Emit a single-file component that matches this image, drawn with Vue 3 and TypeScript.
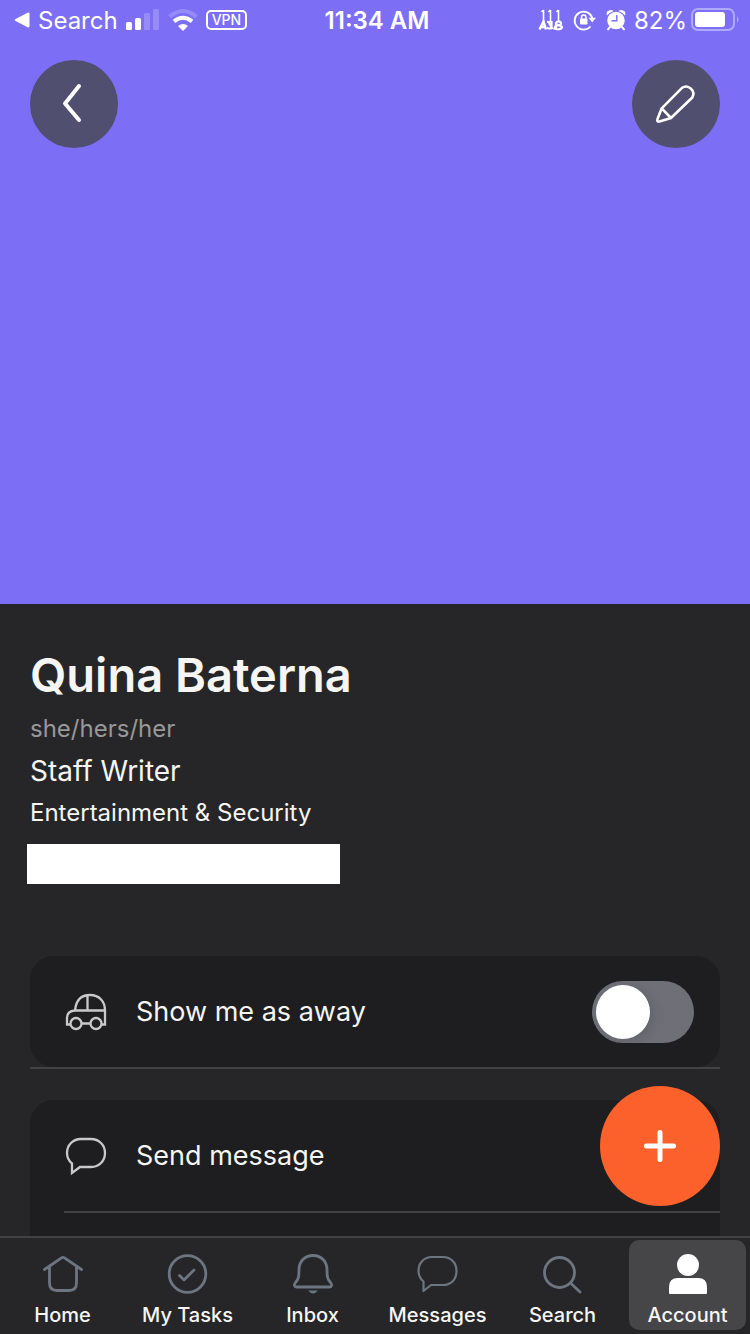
<script setup lang="ts">
import { ref } from 'vue'

interface Tab {
  id: string
  label: string
}

const tabs: Tab[] = [
  { id: 'home', label: 'Home' },
  { id: 'tasks', label: 'My Tasks' },
  { id: 'inbox', label: 'Inbox' },
  { id: 'messages', label: 'Messages' },
  { id: 'search', label: 'Search' },
  { id: 'account', label: 'Account' },
]

const activeTab = ref('account')
const away = ref(false)
</script>

<template>
  <div class="app">
    <div class="scroll">
      <header class="hero">
        <div class="status">
          <div class="status-side">
            <a class="back-app" href="#">
              <svg width="16" height="16" viewBox="0 0 16 16" aria-hidden="true">
                <path d="M1.200 7.200L13.500 0.800Q15.500 0 15.500 2V14Q15.500 16 13.500 15.200L1.200 8.800Q0 8 1.200 7.200Z" fill="#fff" />
              </svg>
              <span>Search</span>
            </a>
            <svg class="signal" width="34" height="22" viewBox="0 0 34 22" aria-hidden="true">
              <rect x="0" y="13" width="6" height="8" rx="1.500" fill="#fff" />
              <rect x="9" y="9" width="6" height="12" rx="1.500" fill="#fff" />
              <rect x="18" y="4" width="6" height="17" rx="1.500" fill="#fff" opacity="0.2" />
              <rect x="27" y="0" width="6" height="21" rx="1.500" fill="#fff" opacity="0.2" />
            </svg>
            <svg class="wifi" width="30" height="22" viewBox="0 0 30 22" aria-hidden="true">
              <path d="M1.600 7.800Q15 -3.800 28.400 7.800" fill="none" stroke="#fff" stroke-width="4" opacity="0.2" />
              <path d="M6 12.400Q15 5 24 12.400" fill="none" stroke="#fff" stroke-width="4" />
              <path d="M10 17Q15 12.800 20 17L15 22Z" fill="#fff" />
            </svg>
            <span class="vpn">VPN</span>
          </div>
          <time class="clock">11:34 AM</time>
          <div class="status-side end">
            <svg width="26" height="22" viewBox="0 0 26 22" fill="none" stroke="#fff" aria-hidden="true">
              <path d="M5.500 1V13M12.500 1V13M20.500 1V13" stroke-width="1.600" />
              <path d="M3.500 3L5.500 1M10.500 3L12.500 1M18.500 3L20.500 1" stroke-width="1.500" />
              <path d="M1.500 20.500L5.500 12.500L8 20.500M3 18H8" stroke-width="2.400" />
              <path d="M9 13H13.500V18Q12 21 9 18.500M11 14L14.500 20" stroke-width="2.200" />
              <path d="M18 13Q23 11.500 23 14.500Q23 16.500 19 16.500Q24 16 24 18.500Q23 21 18 20V13M16 20.500L19 14" stroke-width="2.200" />
            </svg>
            <svg class="lock" width="22" height="22" viewBox="0 0 22 22" fill="none" stroke="#fff" aria-hidden="true">
              <path d="M16.500 17.500A9 9 0 1 1 18.300 9" stroke-width="1.800" />
              <path d="M14.500 8.800H22L18.200 13.500Z" fill="#fff" stroke="none" />
              <path d="M7.500 10V8.500Q7.500 6 9.700 6Q12 6 12 8.500V10" stroke-width="1.500" />
              <rect x="6" y="9.500" width="7.500" height="6" rx="1" fill="#fff" stroke="none" />
            </svg>
            <svg class="alarm" width="20" height="22" viewBox="0 0 20 22" aria-hidden="true">
              <circle cx="10" cy="11.500" r="8.700" fill="#fff" />
              <path d="M1 6.500Q-0.500 2.500 3 1.500Q5.500 0.500 7.500 2Q3 3.500 1 6.500ZM19 6.500Q20.500 2.500 17 1.500Q14.500 0.500 12.500 2Q17 3.500 19 6.500Z" fill="#fff" />
              <path d="M4 18L2 20.300M16 18L18 20.300" stroke="#fff" stroke-width="2" stroke-linecap="round" />
              <path d="M10.800 6V11.800H5.500" fill="none" stroke="#7c6ff6" stroke-width="1.400" />
            </svg>
            <span class="percent">82%</span>
            <svg width="49" height="24" viewBox="0 0 49 24" aria-hidden="true">
              <rect x="1" y="1" width="42" height="21" rx="6" fill="none" stroke="#fff" stroke-width="2" opacity="0.4" />
              <rect x="4" y="4" width="30" height="15" rx="3" fill="#fff" />
              <path d="M46 8Q49 11.500 46 15Z" fill="#fff" opacity="0.4" />
            </svg>
          </div>
        </div>
        <nav class="hero-actions">
          <button class="round" type="button" aria-label="Back">
            <svg width="88" height="88" viewBox="0 0 88 88" aria-hidden="true">
              <path d="M49 26L35 43.500L49 60" fill="none" stroke="#fff" stroke-width="4" stroke-linecap="round" stroke-linejoin="round" />
            </svg>
          </button>
          <button class="round" type="button" aria-label="Edit profile">
            <svg width="88" height="88" viewBox="0 0 88 88" fill="none" stroke="#fff" stroke-width="2.600" stroke-linecap="round" stroke-linejoin="round" aria-hidden="true">
              <path d="M29.700 48.300L50 27.800A7.300 7.300 0 0 1 60.300 37.500L39 58L27.500 61.500Q24.500 62 25.500 59ZM29.700 48.300L39 58" />
            </svg>
          </button>
        </nav>
      </header>

      <main class="content">
        <section class="profile">
          <h1>Quina Baterna</h1>
          <p class="pronouns">she/hers/her</p>
          <p class="role">Staff Writer</p>
          <p class="team">Entertainment &amp; Security</p>
          <div class="redacted"></div>
        </section>

        <section class="group">
          <label class="row" for="away">
            <svg class="row-icon" width="40" height="40" viewBox="0 0 40 40" fill="none" stroke="#c9c9cb" stroke-width="2.300" aria-hidden="true">
              <path d="M4.500 32.500H1V26Q1 19 9 18.500H39V32.500H35.500M15.500 31.500H24.500M9 18.500C10 8 15 3 24 3C33 3 39 9 39 18.500M21.500 3V18.500" />
              <circle cx="10" cy="31.500" r="5.500" />
              <circle cx="30" cy="31.500" r="5.500" />
            </svg>
            <span class="row-label">Show me as away</span>
            <input id="away" v-model="away" class="switch" type="checkbox" role="switch" />
          </label>
        </section>

        <section class="card">
          <button class="row" type="button">
            <svg class="row-icon" width="40" height="40" viewBox="0 0 40 40" fill="none" stroke="#c9c9cb" stroke-width="2.300" aria-hidden="true">
              <path d="M15 3H25C33 3 39 9 39 17C39 25 33 31 25 31H14L6 37V27.500C3 25 1 21 1 17C1 9 7 3 15 3Z" />
            </svg>
            <span class="row-label">Send message</span>
          </button>
          <hr />
        </section>
      </main>
    </div>

    <footer class="dock">
      <button class="fab" type="button" aria-label="Create">
        <svg width="32" height="32" viewBox="0 0 32 32" aria-hidden="true">
          <path d="M16 2.500V29.500M2.500 16H29.500" stroke="#fff" stroke-width="5" stroke-linecap="round" />
        </svg>
      </button>
      <nav class="tabs">
        <button
          v-for="tab in tabs"
          :key="tab.id"
          type="button"
          class="tab"
          :class="{ active: tab.id === activeTab }"
          @click="activeTab = tab.id"
        >
          <svg width="42" height="42" viewBox="0 0 42 42" fill="none" stroke="#6d7580" stroke-width="2.800" stroke-linecap="round" stroke-linejoin="round" aria-hidden="true">
            <path v-if="tab.id === 'home'" d="M2.500 16.500L19.500 4.800Q21 3.800 22.500 4.800L39.500 16.500M7.500 14V30Q7.500 37.500 15 37.500H27Q34.500 37.500 34.500 30V14" />
            <g v-else-if="tab.id === 'tasks'">
              <circle cx="20.500" cy="21" r="18.300" />
              <path d="M12.500 22.500L17 27L27 17" />
            </g>
            <g v-else-if="tab.id === 'inbox'">
              <path d="M21 2.500C12 2.500 7 9 7 17C7 24 6.500 26 3.500 29.500C1.500 32 2.500 34 5 34H37C39.500 34 40.500 32 38.500 29.500C35.500 26 35 24 35 17C35 9 30 2.500 21 2.500Z" />
              <path d="M16 37.500H26Q21 43.500 16 37.500Z" fill="#6d7580" stroke="none" />
            </g>
            <path v-else-if="tab.id === 'messages'" d="M15 4H26C34 4 39.500 10 39.500 18C39.500 26.500 34 32 26 32H14L6.500 38V28.500C3.500 26 1.500 22 1.500 18C1.500 10 7 4 15 4Z" stroke-width="2.200" />
            <path v-else-if="tab.id === 'search'" d="M17.500 4.500A15 15 0 1 1 17.500 34.500A15 15 0 1 1 17.500 4.500ZM29 30.500L38 39" />
            <g v-else fill="#fff" stroke="none">
              <circle cx="21" cy="12" r="11" />
              <path d="M2 40V34Q2 25 11 25H31Q40 25 40 34V40Q40 41 39 41H3Q2 41 2 40Z" />
            </g>
          </svg>
          <span>{{ tab.label }}</span>
        </button>
      </nav>
    </footer>
  </div>
</template>

<style>
body {
  background: #262628;
}
</style>

<style scoped>
.app {
  display: flex;
  flex-direction: column;
  height: 100vh;
  overflow: hidden;
  background: #262628;
  color: #f5f5f3;
  font-family: Inter, "Liberation Sans", sans-serif;
}
button {
  padding: 0;
  border: 0;
  background: none;
  color: inherit;
  font: inherit;
  cursor: pointer;
}
svg {
  display: block;
  flex: none;
  overflow: visible;
}
.scroll {
  display: flex;
  flex: 1;
  flex-direction: column;
  min-height: 0;
  overflow-y: auto;
  scrollbar-width: none;
}
.hero {
  flex: none;
  box-sizing: border-box;
  min-height: 604px;
  background: #7c6ff6;
}
.status {
  display: flex;
  align-items: center;
  height: 40px;
  padding: 0 10px 0 14px;
  color: #fff;
  font-size: 24px;
}
.status-side {
  display: flex;
  flex: 1;
  align-items: center;
}
.end {
  justify-content: flex-end;
}
.back-app {
  display: flex;
  align-items: center;
  gap: 8px;
  color: inherit;
  text-decoration: none;
}
.signal,
.wifi,
.vpn {
  margin-left: 8px;
}
.vpn {
  padding: 0 4px;
  border: 2px solid #fff;
  border-radius: 5px;
  font-size: 14px;
  font-weight: 500;
  line-height: 16px;
}
.clock {
  font-weight: 600;
}
.lock,
.alarm {
  margin-left: 10px;
}
.percent {
  margin: 0 4px 0 8px;
}
.hero-actions {
  display: flex;
  justify-content: space-between;
  padding: 20px 30px 0;
}
.round {
  width: 88px;
  height: 88px;
  border-radius: 50%;
  background: #504f70;
}
.content {
  display: flex;
  flex: 1;
  flex-direction: column;
  padding: 40px 30px 0;
}
.profile {
  margin-bottom: 72px;
}
h1,
p {
  margin: 0;
}
h1 {
  margin-bottom: 2px;
  font-size: 47px;
  font-weight: 600;
  line-height: 62px;
}
p {
  font-size: 24px;
  line-height: 42px;
}
.pronouns {
  color: #98989a;
}
.role {
  font-size: 28px;
}
.redacted {
  width: 313px;
  height: 40px;
  margin: 10px 0 0 -3px;
  background: #fff;
}
.group {
  margin-bottom: 31px;
  border-bottom: 2px solid #424244;
}
.group .row {
  border-radius: 24px;
  background: #1e1e20;
}
.card {
  flex: 1;
  border-radius: 24px 24px 0 0;
  background: #1e1e20;
}
.card hr {
  height: 2px;
  margin: 0 0 0 34px;
  border: 0;
  background: #424244;
}
.row {
  display: flex;
  align-items: center;
  box-sizing: border-box;
  width: 100%;
  height: 111px;
  padding: 0 26px 0 36px;
  text-align: left;
}
.row-label {
  flex: 1;
  margin-left: 30px;
  font-size: 27px;
}
.switch {
  flex: none;
  appearance: none;
  width: 102px;
  height: 62px;
  margin: 0;
  padding: 4px;
  overflow: hidden;
  border-radius: 31px;
  background: #6f6f77;
  cursor: pointer;
}
.switch::before {
  display: block;
  width: 54px;
  height: 54px;
  border-radius: 50%;
  background: #fff;
  box-shadow: 4px 2px 12px rgba(0, 0, 0, 0.12);
  content: "";
}
.switch:checked {
  background: #34c759;
}
.switch:checked::before {
  margin-left: 40px;
}
.dock {
  position: relative;
  flex: none;
  border-top: 2px solid #424244;
  background: #262628;
}
.fab {
  position: absolute;
  right: 30px;
  bottom: 128px;
  display: grid;
  place-items: center;
  width: 120px;
  height: 120px;
  border-radius: 50%;
  background: #fd612b;
}
.tabs {
  display: grid;
  grid-template-columns: repeat(6, 1fr);
  height: 96px;
}
.tab {
  display: flex;
  flex-direction: column;
  align-items: center;
  gap: 8px;
  margin: 2px 4px 4px;
  padding-top: 13px;
  border-radius: 10px;
  font-size: 20px;
  font-weight: 500;
  line-height: 24px;
  white-space: nowrap;
}
.tab.active {
  background: #464648;
}
</style>
